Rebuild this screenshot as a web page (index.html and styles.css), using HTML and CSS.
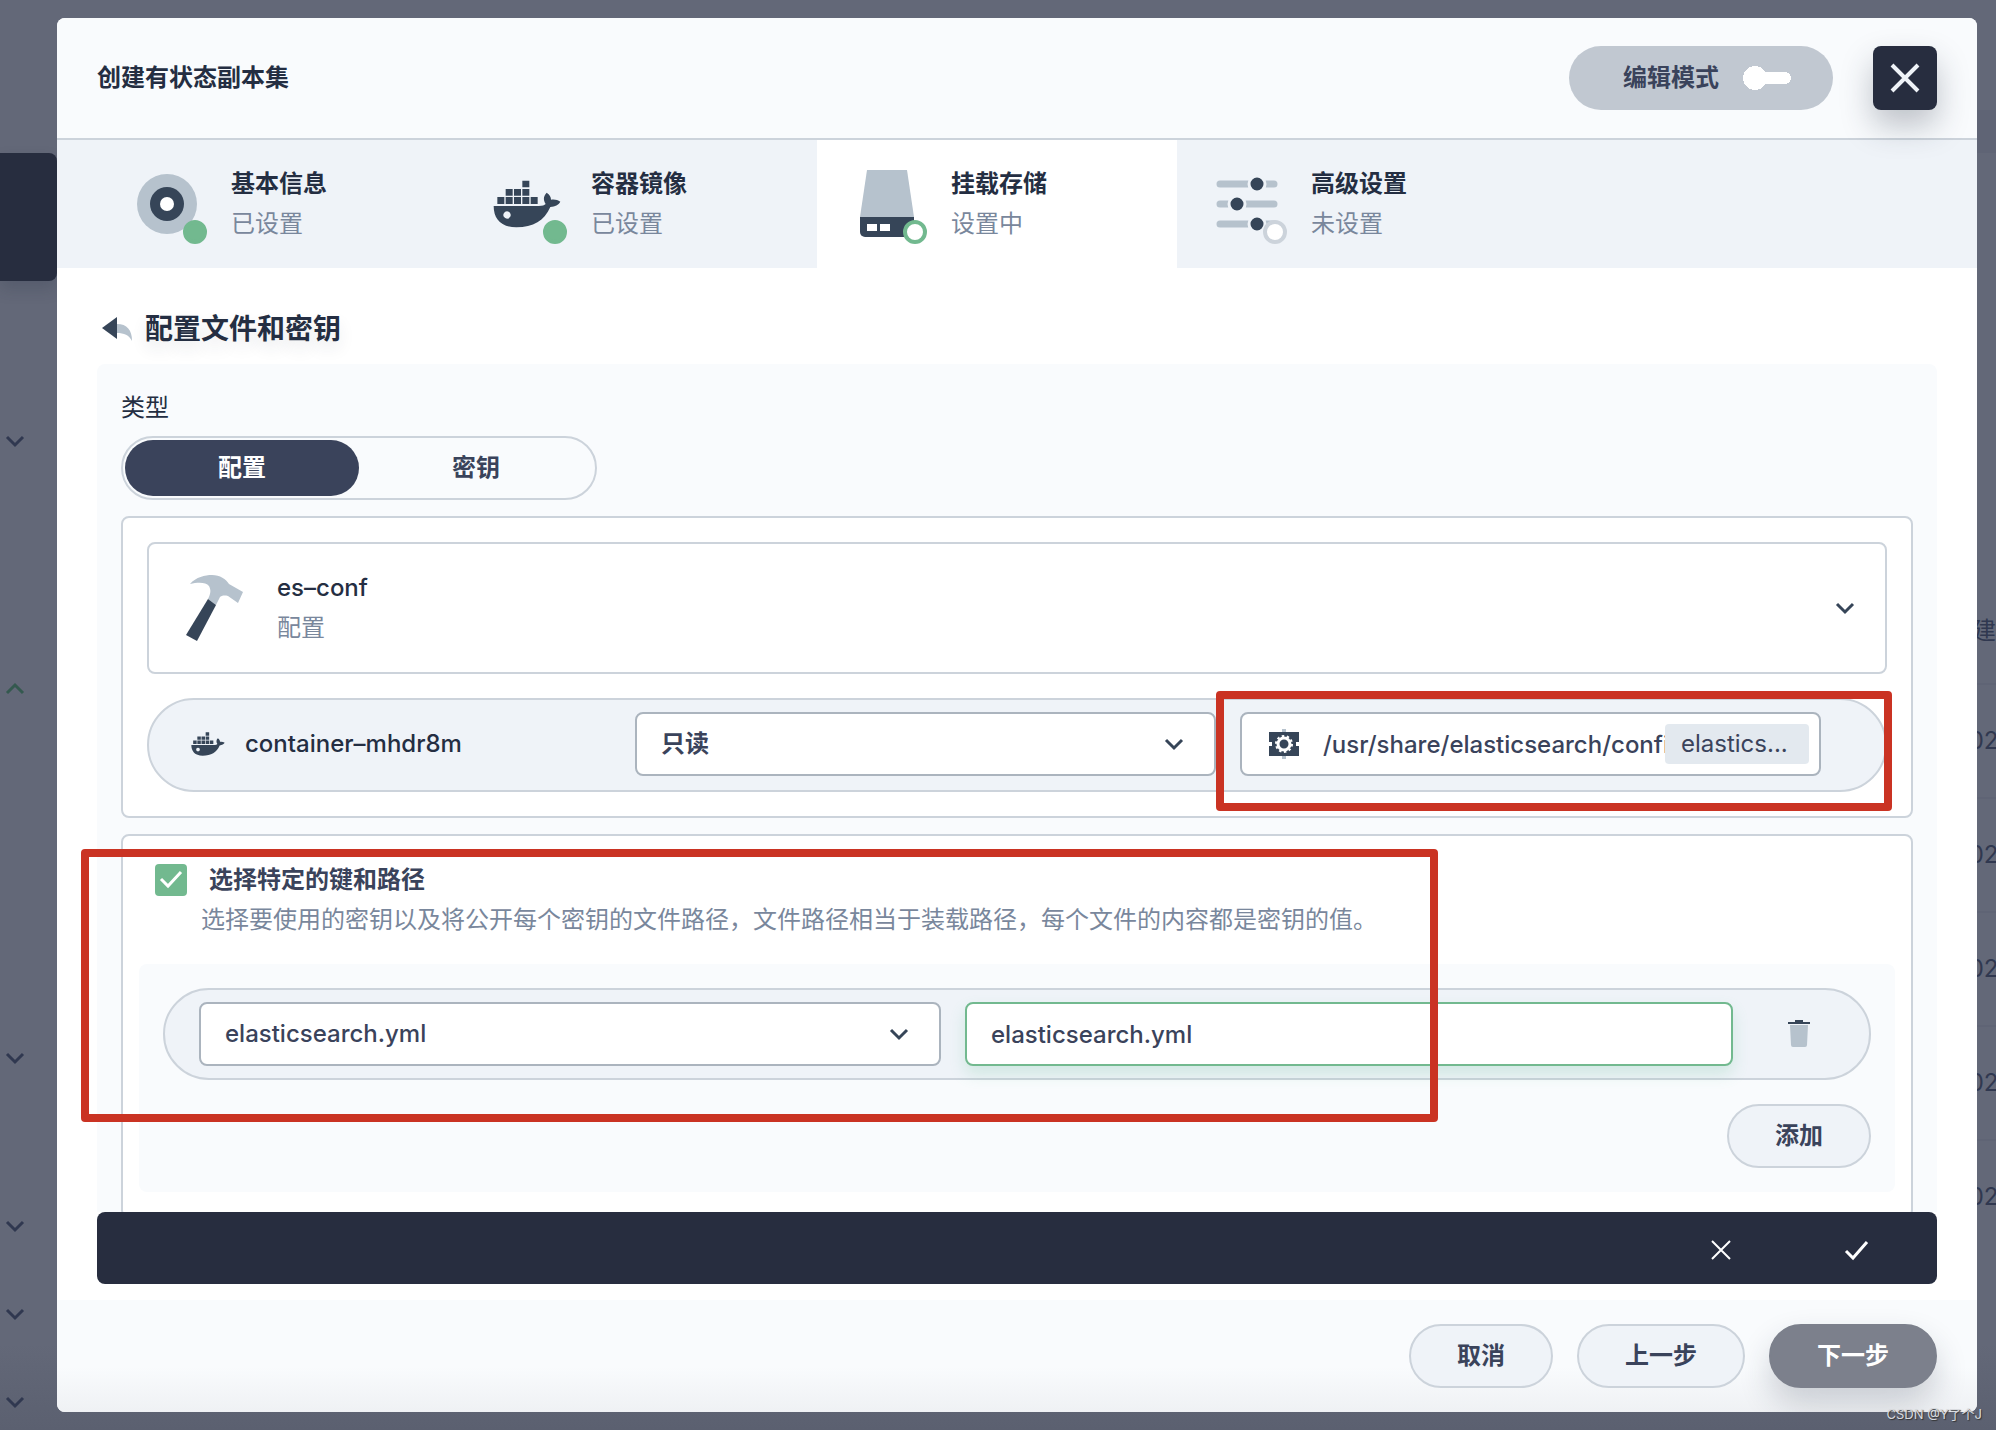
FILE: index.html
```html
<!DOCTYPE html>
<html lang="zh-CN">
<head>
<meta charset="utf-8">
<meta name="viewport" content="width=device-width, initial-scale=1">
<title>创建有状态副本集</title>
<link rel="stylesheet" href="styles.css">
</head>
<body>
<svg class="sprite" aria-hidden="true">
  <symbol id="whale" viewBox="40 60 202 144">
    <path d="M127 62h21v20h-21zM77 87h21v20H77zM102 87h21v20h-21zM127 87h21v20h-21zM52 111h21v21H52zM77 111h21v21H77zM102 111h21v21h-21zM127 111h21v21h-21zM152 111h21v21h-21z"/>
    <path fill-rule="evenodd" d="M41 138H176C188 138 193 136 197 132C189 120 190 108 200 98C209 104 213 111 213 119C224 117 233 120 241 125C235 135 226 139 211 141C193 182 160 202 109 202C62 202 41 175 41 138ZM81 154a11 11 0 1 0 .1 0z"/>
  </symbol>
  <symbol id="chevron" viewBox="0 0 20 20"><path d="M2 6l8 8 8-8" fill="none" stroke="currentColor" stroke-width="3"/></symbol>
</svg>

<div class="backdrop" aria-hidden="true">
  <div class="side">
    <div class="side-card"></div>
    <svg class="chev c1"><use href="#chevron"/></svg>
    <svg class="chev c2"><use href="#chevron"/></svg>
    <svg class="chev c3"><use href="#chevron"/></svg>
    <svg class="chev"><use href="#chevron"/></svg>
    <svg class="chev"><use href="#chevron"/></svg>
    <svg class="chev"><use href="#chevron"/></svg>
  </div>
  <div class="list">
    <div class="list-band"></div>
    <div class="list-head">创建</div>
    <div class="list-row">202</div>
    <div class="list-row">202</div>
    <div class="list-row">202</div>
    <div class="list-row">202</div>
    <div class="list-row">202</div>
  </div>
</div>

<main class="modal" role="dialog" aria-labelledby="dlg-title">
  <header class="head">
    <h1 id="dlg-title">创建有状态副本集</h1>
    <label class="mode">编辑模式<input type="checkbox" class="switch"></label>
    <button class="close" aria-label="关闭"><svg viewBox="0 0 32 32"><path d="M3 3l26 26M29 3L3 29" stroke="currentColor" stroke-width="4"/></svg></button>
  </header>

  <nav class="tabs">
    <button class="tab">
      <span class="tab-icon"><svg viewBox="0 0 64 64"><circle class="light" cx="32" cy="32" r="30"/><circle class="dark" cx="32" cy="32" r="17"/><circle cx="32" cy="32" r="7" fill="#fff"/></svg><i class="dot done"></i></span>
      <span class="pair"><b>基本信息</b><span>已设置</span></span>
    </button>
    <button class="tab">
      <span class="tab-icon"><svg class="whale-lg dark"><use href="#whale"/></svg><i class="dot done"></i></span>
      <span class="pair"><b>容器镜像</b><span>已设置</span></span>
    </button>
    <button class="tab active">
      <span class="tab-icon"><svg viewBox="0 0 64 64"><path class="light" d="M12-2h40l7 47H5z"/><path class="dark" d="M5 45h54v15a5 5 0 0 1-5 5H10a5 5 0 0 1-5-5z"/><path d="M12 52h10v7H12zM25 52h10v7H25z" fill="#fff"/></svg><i class="dot doing"></i></span>
      <span class="pair"><b>挂载存储</b><span>设置中</span></span>
    </button>
    <button class="tab">
      <span class="tab-icon"><svg viewBox="0 0 64 64"><path d="M5 12h54M5 32h54M5 52h54" stroke="#b6c2cd" stroke-width="7" stroke-linecap="round"/><g class="dark" stroke="#eff3f8" stroke-width="3"><circle cx="42" cy="12" r="8"/><circle cx="22" cy="32" r="8"/><circle cx="42" cy="52" r="8"/></g></svg><i class="dot todo"></i></span>
      <span class="pair"><b>高级设置</b><span>未设置</span></span>
    </button>
  </nav>

  <section class="body">
    <h2><a href="#" aria-label="返回"><svg viewBox="0 0 32 26"><path class="dark" d="M1 12L16 1v22z"/><path class="light" d="M16 8c10 0 15 6 15 17-3-6-8-8-15-8z"/></svg></a>配置文件和密钥</h2>

    <div class="panel">
      <div class="label" id="type-label">类型</div>
      <div class="segment" role="radiogroup" aria-labelledby="type-label">
        <label><input type="radio" name="type" checked><span>配置</span></label>
        <label><input type="radio" name="type"><span>密钥</span></label>
      </div>

      <div class="card mount">
        <button class="resource">
          <svg class="hammer" viewBox="0 0 64 64"><path class="light" d="M9 8C15 1 24-1 31-1C39-1 45 3 48 8L62 16L57 27L47 20C43 19 40 20 39 21L35 29L27 23C30 17 30 14 28 10C25 6 17 6 9 8z"/><path class="dark" d="M27 23l8 6-19 36-11-6z"/></svg>
          <span class="pair"><b class="latin">es–conf</b><span>配置</span></span>
          <svg class="chev"><use href="#chevron"/></svg>
        </button>
        <div class="pill container">
          <div class="name"><svg class="whale-sm dark"><use href="#whale"/></svg>container–mhdr8m</div>
          <div class="select"><select class="cjk" aria-label="权限"><option>只读</option></select><svg class="chev"><use href="#chevron"/></svg></div>
          <div class="path">
            <svg class="gear" viewBox="0 0 32 32"><path d="M16 1v30" stroke="#b6c2cd" stroke-width="4"/><path class="dark" d="M1 4h30v10h-3v4h3v10H1V18h3v-4H1z"/><circle cx="16" cy="16" r="6" fill="none" stroke="#fff" stroke-width="3"/><circle cx="16" cy="16" r="8" fill="none" stroke="#fff" stroke-width="2" stroke-dasharray="2.5 2.527"/></svg>
            <input type="text" aria-label="挂载路径" value="/usr/share/elasticsearch/config">
            <span class="tag">elastics...</span>
          </div>
        </div>
      </div>

      <div class="card keys">
        <div class="check">
          <span class="tick"><input type="checkbox" id="pick" checked><svg viewBox="0 0 32 32"><path d="M6 15l7 7L26 8" fill="none" stroke="#fff" stroke-width="3"/></svg></span>
          <label for="pick">选择特定的键和路径</label>
        </div>
        <p>选择要使用的密钥以及将公开每个密钥的文件路径，文件路径相当于装载路径，每个文件的内容都是密钥的值。</p>
        <div class="items">
          <div class="pill item">
            <div class="select"><select aria-label="键"><option>elasticsearch.yml</option></select><svg class="chev"><use href="#chevron"/></svg></div>
            <input class="field" type="text" aria-label="路径" value="elasticsearch.yml">
            <button class="trash" aria-label="删除"><svg viewBox="0 0 24 28"><path class="dark" d="M1 4V2h7V0h8v2h7v2z"/><path class="light" d="M3 5h18l-1 20a2 2 0 0 1-2 2H6a2 2 0 0 1-2-2z"/></svg></button>
          </div>
          <button class="btn">添加</button>
        </div>
      </div>
    </div>
  </section>

  <div class="confirm">
    <button aria-label="取消修改"><svg viewBox="0 0 24 24"><path d="M3 3l18 18M21 3L3 21" stroke="currentColor" stroke-width="2"/></svg></button>
    <button aria-label="确认修改"><svg viewBox="0 0 24 24"><path d="M1 13l7 7L22 4" fill="none" stroke="currentColor" stroke-width="3"/></svg></button>
  </div>

  <footer class="foot">
    <button class="btn">取消</button>
    <button class="btn">上一步</button>
    <button class="btn primary">下一步</button>
  </footer>

  <div class="mark mark-path"></div>
  <div class="mark mark-keys"></div>
</main>
<div class="watermark">CSDN @Y了个J</div>
</body>
</html>
```
FILE: styles.css
```css
* { box-sizing: border-box; }

body {
  margin: 0;
  min-height: 100vh;
  padding: 18px 19px 18px 57px;
  background: #636878;
  color: #242e42;
  font: 400 24px/40px Inter, "Noto Sans CJK SC", sans-serif;
}

button, input, select { font: inherit; color: inherit; }
button { padding: 0; border: 0; background: none; cursor: pointer; }
h1, h2, p { margin: 0; }
svg { display: block; flex: none; overflow: visible; }
.sprite { position: absolute; width: 0; height: 0; }
.dark { fill: #364558; }
.light { fill: #b6c2cd; }
.chev { width: 20px; height: 20px; color: #364558; }

/* Page behind the dialog */
.backdrop { position: absolute; inset: 0; overflow: hidden; display: flex; justify-content: space-between; background: linear-gradient(#636878 94%, #5b6070); }
.side { width: 57px; padding-top: 153px; }
.side-card { height: 128px; margin-bottom: 150px; border-radius: 0 8px 8px 0; background: #272d3f; box-shadow: 0 8px 16px rgba(36, 46, 66, .2); }
.side .chev { margin: 0 0 68px 5px; color: #303850; }
.side .c1 { margin-bottom: 228px; }
.side .c2 { margin-bottom: 349px; color: #34594f; transform: rotate(180deg); }
.side .c3 { margin-bottom: 148px; }
.list { width: 42px; padding-top: 110px; color: #303850; text-align: right; }
.list-band { height: 43px; margin-bottom: 418px; background: #5f6475; }
.list-head { height: 112px; padding-top: 40px; line-height: 40px; white-space: nowrap; direction: rtl; }
.list-row { height: 114px; border-top: 2px solid #5f6475; line-height: 112px; }

/* Dialog */
.modal { position: relative; display: flex; flex-direction: column; height: calc(100vh - 36px); overflow: hidden; border-radius: 8px; background: #fff; }

.head { display: flex; align-items: center; gap: 40px; flex: none; height: 122px; padding: 0 40px; border-bottom: 2px solid #ccd3db; background: #f9fbfd; }
h1 { flex: 1; font-size: 24px; font-weight: 600; }
.mode { display: flex; align-items: center; gap: 24px; height: 64px; padding: 0 42px 0 54px; border-radius: 32px; background: #c1c8d1; color: #3a435b; font-weight: 600; }
.switch { appearance: none; width: 48px; height: 24px; margin: 0; background: radial-gradient(circle at 12px 12px, #fff 12px, transparent 12px), linear-gradient(#fff, #fff) 12px 6px / 30px 12px no-repeat, radial-gradient(circle at 42px 12px, #fff 6px, transparent 6px); }
.close { display: grid; place-items: center; position: relative; width: 64px; height: 64px; border-radius: 8px; background: #272d3f; color: #eff3f8; box-shadow: 0 16px 32px rgba(36, 46, 66, .28); }
.close svg { width: 32px; height: 32px; }

.tabs { display: flex; flex: none; height: 128px; padding-left: 40px; background: #eff3f8; }
.tab { display: flex; align-items: center; gap: 32px; width: 360px; padding-left: 38px; text-align: left; }
.tab.active { background: #fff; }
.tab-icon { position: relative; width: 64px; height: 64px; }
.whale-lg { width: 68px; height: 48px; margin: 8px 0 0 -2px; }
.dot { position: absolute; right: -8px; bottom: -8px; width: 24px; height: 24px; border: 4px solid; border-radius: 50%; background: #fff; }
.done { border-color: #72b98f; background: #72b98f; }
.doing { border-color: #72b98f; }
.todo { border-color: #ccd3db; }
.pair b { display: block; font-weight: 600; }
.pair .latin { font-weight: 500; }
.pair span { display: block; color: #79879c; }

.body { flex: 1; min-height: 0; overflow: hidden; padding: 36px 40px 0; }
h2 { display: flex; align-items: center; gap: 12px; height: 50px; margin-bottom: 10px; padding-left: 4px; font-size: 28px; font-weight: 600; text-shadow: 0 8px 16px rgba(36, 46, 66, .1); }
h2 svg { width: 32px; height: 26px; }
.panel { padding: 24px 24px 48px; border-radius: 8px; background: #f9fbfd; }
.label { height: 48px; }

.segment { display: flex; width: 476px; height: 64px; margin-bottom: 16px; padding: 2px; border: 2px solid #ccd3db; border-radius: 32px; }
.segment label { flex: 1; display: flex; font-weight: 600; color: #3a435b; }
.segment input { appearance: none; width: 0; margin: 0; }
.segment span { flex: 1; border-radius: 28px; line-height: 56px; text-align: center; }
.segment input:checked + span { background: #3a435b; color: #fff; }

.card { border: 2px solid #ccd3db; border-radius: 8px; background: #fff; }
.mount { display: grid; gap: 24px; margin-bottom: 16px; padding: 24px; }
.resource { display: flex; align-items: center; gap: 32px; height: 132px; padding: 0 30px 0 32px; border: 2px solid #ccd3db; border-radius: 8px; text-align: left; }
.resource .pair { flex: 1; }
.hammer { width: 64px; height: 64px; }

.pill { display: grid; align-items: center; gap: 24px; height: 92px; border: 2px solid #ccd3db; border-radius: 46px; background: #eff3f8; font-weight: 500; }
.container { grid-template-columns: 420px 1fr 1fr; height: 94px; padding: 0 64px 2px 42px; border-radius: 47px; }
.name { display: flex; align-items: center; gap: 20px; }
.whale-sm { width: 34px; height: 24px; }
.select { display: grid; align-items: center; color: #3a435b; }
.select select { grid-area: 1 / 1; appearance: none; width: 100%; height: 64px; padding: 0 64px 0 24px; border: 2px solid #abb4be; border-radius: 8px; background: #fff; font-weight: 500; }
.select .cjk { font-weight: 600; }
.select .chev { grid-area: 1 / 1; justify-self: end; margin-right: 32px; pointer-events: none; }
.path { display: flex; align-items: center; height: 64px; min-width: 0; padding: 0 10px 0 26px; border: 2px solid #abb4be; border-radius: 8px; background: #fff; color: #3a435b; }
.gear { width: 32px; height: 32px; }
.path input { flex: 1; min-width: 0; height: 60px; margin-left: 23px; padding: 0; border: 0; outline: 0; background: none; font-weight: 500; }
.tag { width: 144px; padding-left: 16px; border-radius: 4px; background: #e3e9ef; font-weight: 400; }

.keys { padding: 25px 16px 24px; }
.check { display: flex; align-items: center; gap: 22px; height: 38px; padding-left: 16px; color: #3a435b; font-weight: 600; }
.tick { display: grid; width: 32px; height: 32px; }
.tick input { grid-area: 1 / 1; appearance: none; width: 32px; height: 32px; margin: 0; border-radius: 4px; background: #72b98f; }
.tick svg { grid-area: 1 / 1; pointer-events: none; }
.keys p { margin: 1px 0 24px 62px; color: #79879c; }
.items { display: flex; flex-direction: column; align-items: flex-end; gap: 24px; padding: 24px; border-radius: 8px; background: #f9fbfd; }
.item { grid-template-columns: 371fr 384fr 84px; align-self: stretch; padding: 0 28px 0 34px; color: #3a435b; }
.field { width: 100%; height: 64px; padding: 0 24px; border: 2px solid #72b98f; border-radius: 8px; outline: 0; background: #fff; font-weight: 500; box-shadow: 0 8px 16px rgba(85, 188, 138, .2); }
.trash { display: grid; place-items: center; height: 64px; }
.trash svg { width: 24px; height: 28px; }

.btn { height: 64px; padding: 0 46px; border: 2px solid #ccd3db; border-radius: 32px; background: #eff3f8; color: #3a435b; font-weight: 600; }
.primary { border-color: #7c808c; background: #7c808c; color: #fff; box-shadow: 0 16px 32px rgba(36, 46, 66, .2); }

.confirm { display: flex; flex: none; justify-content: flex-end; align-items: center; gap: 72px; height: 72px; margin: 0 40px 16px; padding: 4px 48px 0 0; border-radius: 8px; background: #272d3f; color: #fff; }
.confirm button { display: grid; place-items: center; width: 64px; height: 48px; }
.confirm svg { width: 24px; height: 24px; }
.foot { display: flex; flex: none; justify-content: flex-end; align-items: center; gap: 24px; height: 112px; padding: 0 40px; background: linear-gradient(#f9fbfd 60%, #eff1f4); }

/* Highlight frames over the form */
.mark { position: absolute; border: 8px solid #ca3323; border-radius: 4px; pointer-events: none; }
.mark-path { top: 673px; right: 85px; width: 676px; height: 120px; }
.mark-keys { top: 831px; left: 24px; width: 1357px; height: 273px; }

.watermark { position: absolute; right: 14px; bottom: 6px; color: #d8dade; font-size: 13px; line-height: 20px; text-shadow: 1px 1px 1px #333; }
```
